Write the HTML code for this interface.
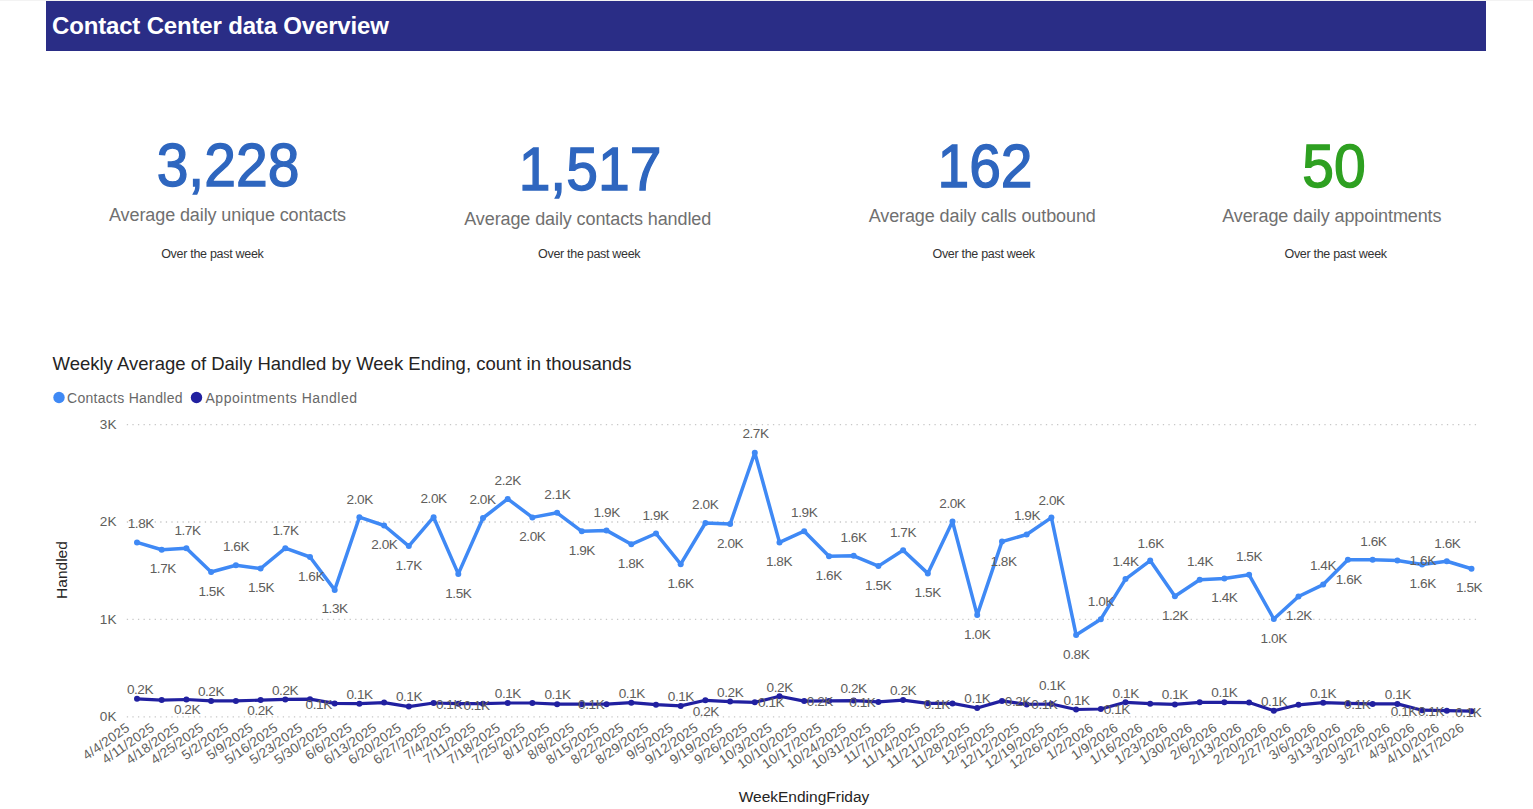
<!DOCTYPE html>
<html><head><meta charset="utf-8">
<style>
html,body{margin:0;padding:0;background:#fff;}
body{width:1533px;height:809px;overflow:hidden;position:relative;font-family:"Liberation Sans",sans-serif;}
.topline{position:absolute;left:0;top:0;width:1533px;height:1px;background:#f3f3f3;}
.banner{position:absolute;left:46px;top:1px;width:1440px;height:50px;background:#2a2d86;}
.banner span{position:absolute;left:6px;top:9px;letter-spacing:-0.17px;font-weight:bold;font-size:24px;color:#fff;white-space:nowrap;line-height:32px;}
.t{position:absolute;white-space:nowrap;text-align:center;line-height:1;}
.num{font-size:62px;color:#2e66bf;transform:scaleX(0.92);transform-origin:50% 50%;-webkit-text-stroke:1.4px currentColor;}
.lab{font-size:18px;color:#707070;letter-spacing:-0.1px;}
.sub{font-size:12.5px;color:#333;letter-spacing:-0.3px;}
svg{position:absolute;left:0;top:0;}
svg text{font-family:"Liberation Sans",sans-serif;}
.g{stroke:#c8c8c8;stroke-width:1.3;stroke-dasharray:1.3 4.27;}
.yl{font-size:13.6px;fill:#605e5c;text-anchor:end;}
.dl{font-size:13.6px;fill:#605e5c;text-anchor:middle;letter-spacing:-0.45px;}
.xl{font-size:13.5px;fill:#605e5c;text-anchor:end;letter-spacing:0.1px;}
.lc{fill:none;stroke:#3f89f5;stroke-width:3.5;stroke-linejoin:round;}
.la{fill:none;stroke:#2120a0;stroke-width:3.2;stroke-linejoin:round;}
.title{font-size:18.5px;fill:#252423;}
.leg{font-size:14px;fill:#686868;}
.axt{font-size:15.5px;fill:#252423;}
</style></head><body>
<div class="topline"></div>
<div class="banner"><span>Contact Center data Overview</span></div>

<div class="t num" style="left:107.65px;top:134px;width:240px;">3,228</div>
<div class="t lab" style="left:77.5px;top:206px;width:300px;">Average daily unique contacts</div>
<div class="t sub" style="left:112.35px;top:248px;width:200px;">Over the past week</div>

<div class="t num" style="left:470.1px;top:138px;width:240px;">1,517</div>
<div class="t lab" style="left:437.7px;top:210px;width:300px;">Average daily contacts handled</div>
<div class="t sub" style="left:489.2px;top:248px;width:200px;">Over the past week</div>

<div class="t num" style="left:864.8px;top:135px;width:240px;">162</div>
<div class="t lab" style="left:832.2px;top:207px;width:300px;">Average daily calls outbound</div>
<div class="t sub" style="left:883.65px;top:248px;width:200px;">Over the past week</div>

<div class="t num" style="left:1213.65px;top:135px;width:240px;color:#2ea021;">50</div>
<div class="t lab" style="left:1181.8px;top:207px;width:300px;">Average daily appointments</div>
<div class="t sub" style="left:1235.65px;top:248px;width:200px;">Over the past week</div>

<svg width="1533" height="809" viewBox="0 0 1533 809">
<text x="52.5" y="370" class="title">Weekly Average of Daily Handled by Week Ending, count in thousands</text>
<circle cx="59" cy="397.5" r="5.7" fill="#3f89f5"/>
<text x="67" y="402.5" class="leg" textLength="115.5" lengthAdjust="spacing">Contacts Handled</text>
<circle cx="196.5" cy="397.5" r="5.7" fill="#2120a0"/>
<text x="205.5" y="402.5" class="leg" textLength="151.5" lengthAdjust="spacing">Appointments Handled</text>
<text transform="translate(67.3,570) rotate(-90)" class="axt" text-anchor="middle">Handled</text>
<text x="804" y="801.6" class="axt" text-anchor="middle">WeekEndingFriday</text>
<line x1="126.8" y1="424.6" x2="1478.5" y2="424.6" class="g"/>
<line x1="126.8" y1="522.0" x2="1478.5" y2="522.0" class="g"/>
<line x1="126.8" y1="619.4" x2="1478.5" y2="619.4" class="g"/>
<line x1="126.8" y1="716.8" x2="1478.5" y2="716.8" class="g"/>
<text x="116.5" y="428.8" class="yl">3K</text>
<text x="116.5" y="526.2" class="yl">2K</text>
<text x="116.5" y="623.6" class="yl">1K</text>
<text x="116.5" y="721.0" class="yl">0K</text>
<polyline points="137.0,542.4 161.7,549.8 186.4,548.2 211.1,572.0 235.9,565.3 260.6,568.5 285.3,548.2 310.0,557.0 334.7,589.9 359.4,517.2 384.1,525.5 408.8,546.1 433.6,517.2 458.3,573.9 483.0,518.0 507.7,498.9 532.4,517.4 557.1,512.8 581.8,531.3 606.5,530.4 631.3,544.3 656.0,533.5 680.7,564.2 705.4,523.0 730.1,524.1 754.8,452.7 779.5,542.4 804.2,531.2 829.0,556.2 853.7,555.8 878.4,566.1 903.1,550.2 927.8,573.4 952.5,521.5 977.2,615.1 1002.0,541.6 1026.7,534.5 1051.4,517.6 1076.1,634.9 1100.8,619.2 1125.5,579.1 1150.2,560.6 1174.9,596.2 1199.7,579.7 1224.4,578.5 1249.1,574.8 1273.8,619.0 1298.5,596.5 1323.2,584.6 1347.9,559.7 1372.6,559.7 1397.4,560.5 1422.1,564.6 1446.8,561.3 1471.5,568.7" class="lc"/>
<circle cx="137.0" cy="542.4" r="3" fill="#3f89f5"/>
<circle cx="161.7" cy="549.8" r="3" fill="#3f89f5"/>
<circle cx="186.4" cy="548.2" r="3" fill="#3f89f5"/>
<circle cx="211.1" cy="572.0" r="3" fill="#3f89f5"/>
<circle cx="235.9" cy="565.3" r="3" fill="#3f89f5"/>
<circle cx="260.6" cy="568.5" r="3" fill="#3f89f5"/>
<circle cx="285.3" cy="548.2" r="3" fill="#3f89f5"/>
<circle cx="310.0" cy="557.0" r="3" fill="#3f89f5"/>
<circle cx="334.7" cy="589.9" r="3" fill="#3f89f5"/>
<circle cx="359.4" cy="517.2" r="3" fill="#3f89f5"/>
<circle cx="384.1" cy="525.5" r="3" fill="#3f89f5"/>
<circle cx="408.8" cy="546.1" r="3" fill="#3f89f5"/>
<circle cx="433.6" cy="517.2" r="3" fill="#3f89f5"/>
<circle cx="458.3" cy="573.9" r="3" fill="#3f89f5"/>
<circle cx="483.0" cy="518.0" r="3" fill="#3f89f5"/>
<circle cx="507.7" cy="498.9" r="3" fill="#3f89f5"/>
<circle cx="532.4" cy="517.4" r="3" fill="#3f89f5"/>
<circle cx="557.1" cy="512.8" r="3" fill="#3f89f5"/>
<circle cx="581.8" cy="531.3" r="3" fill="#3f89f5"/>
<circle cx="606.5" cy="530.4" r="3" fill="#3f89f5"/>
<circle cx="631.3" cy="544.3" r="3" fill="#3f89f5"/>
<circle cx="656.0" cy="533.5" r="3" fill="#3f89f5"/>
<circle cx="680.7" cy="564.2" r="3" fill="#3f89f5"/>
<circle cx="705.4" cy="523.0" r="3" fill="#3f89f5"/>
<circle cx="730.1" cy="524.1" r="3" fill="#3f89f5"/>
<circle cx="754.8" cy="452.7" r="3" fill="#3f89f5"/>
<circle cx="779.5" cy="542.4" r="3" fill="#3f89f5"/>
<circle cx="804.2" cy="531.2" r="3" fill="#3f89f5"/>
<circle cx="829.0" cy="556.2" r="3" fill="#3f89f5"/>
<circle cx="853.7" cy="555.8" r="3" fill="#3f89f5"/>
<circle cx="878.4" cy="566.1" r="3" fill="#3f89f5"/>
<circle cx="903.1" cy="550.2" r="3" fill="#3f89f5"/>
<circle cx="927.8" cy="573.4" r="3" fill="#3f89f5"/>
<circle cx="952.5" cy="521.5" r="3" fill="#3f89f5"/>
<circle cx="977.2" cy="615.1" r="3" fill="#3f89f5"/>
<circle cx="1002.0" cy="541.6" r="3" fill="#3f89f5"/>
<circle cx="1026.7" cy="534.5" r="3" fill="#3f89f5"/>
<circle cx="1051.4" cy="517.6" r="3" fill="#3f89f5"/>
<circle cx="1076.1" cy="634.9" r="3" fill="#3f89f5"/>
<circle cx="1100.8" cy="619.2" r="3" fill="#3f89f5"/>
<circle cx="1125.5" cy="579.1" r="3" fill="#3f89f5"/>
<circle cx="1150.2" cy="560.6" r="3" fill="#3f89f5"/>
<circle cx="1174.9" cy="596.2" r="3" fill="#3f89f5"/>
<circle cx="1199.7" cy="579.7" r="3" fill="#3f89f5"/>
<circle cx="1224.4" cy="578.5" r="3" fill="#3f89f5"/>
<circle cx="1249.1" cy="574.8" r="3" fill="#3f89f5"/>
<circle cx="1273.8" cy="619.0" r="3" fill="#3f89f5"/>
<circle cx="1298.5" cy="596.5" r="3" fill="#3f89f5"/>
<circle cx="1323.2" cy="584.6" r="3" fill="#3f89f5"/>
<circle cx="1347.9" cy="559.7" r="3" fill="#3f89f5"/>
<circle cx="1372.6" cy="559.7" r="3" fill="#3f89f5"/>
<circle cx="1397.4" cy="560.5" r="3" fill="#3f89f5"/>
<circle cx="1422.1" cy="564.6" r="3" fill="#3f89f5"/>
<circle cx="1446.8" cy="561.3" r="3" fill="#3f89f5"/>
<circle cx="1471.5" cy="568.7" r="3" fill="#3f89f5"/>
<polyline points="137.0,698.8 161.7,700.1 186.4,699.5 211.1,700.9 235.9,700.9 260.6,700.1 285.3,699.4 310.0,699.2 334.7,703.4 359.4,703.7 384.1,702.6 408.8,706.6 433.6,703.0 458.3,703.7 483.0,703.7 507.7,703.0 532.4,703.0 557.1,704.2 581.8,704.2 606.5,704.2 631.3,702.7 656.0,704.7 680.7,705.9 705.4,700.3 730.1,701.6 754.8,702.3 779.5,696.3 804.2,701.1 829.0,700.9 853.7,700.6 878.4,701.9 903.1,700.1 927.8,703.3 952.5,703.4 977.2,708.0 1002.0,700.9 1026.7,704.4 1051.4,704.0 1076.1,709.5 1100.8,709.0 1125.5,702.3 1150.2,703.7 1174.9,704.4 1199.7,702.3 1224.4,702.3 1249.1,702.6 1273.8,710.7 1298.5,704.8 1323.2,702.7 1347.9,703.4 1372.6,703.9 1397.4,703.9 1422.1,710.2 1446.8,710.7 1471.5,711.2" class="la"/>
<circle cx="137.0" cy="698.8" r="3" fill="#2120a0"/>
<circle cx="161.7" cy="700.1" r="3" fill="#2120a0"/>
<circle cx="186.4" cy="699.5" r="3" fill="#2120a0"/>
<circle cx="211.1" cy="700.9" r="3" fill="#2120a0"/>
<circle cx="235.9" cy="700.9" r="3" fill="#2120a0"/>
<circle cx="260.6" cy="700.1" r="3" fill="#2120a0"/>
<circle cx="285.3" cy="699.4" r="3" fill="#2120a0"/>
<circle cx="310.0" cy="699.2" r="3" fill="#2120a0"/>
<circle cx="334.7" cy="703.4" r="3" fill="#2120a0"/>
<circle cx="359.4" cy="703.7" r="3" fill="#2120a0"/>
<circle cx="384.1" cy="702.6" r="3" fill="#2120a0"/>
<circle cx="408.8" cy="706.6" r="3" fill="#2120a0"/>
<circle cx="433.6" cy="703.0" r="3" fill="#2120a0"/>
<circle cx="458.3" cy="703.7" r="3" fill="#2120a0"/>
<circle cx="483.0" cy="703.7" r="3" fill="#2120a0"/>
<circle cx="507.7" cy="703.0" r="3" fill="#2120a0"/>
<circle cx="532.4" cy="703.0" r="3" fill="#2120a0"/>
<circle cx="557.1" cy="704.2" r="3" fill="#2120a0"/>
<circle cx="581.8" cy="704.2" r="3" fill="#2120a0"/>
<circle cx="606.5" cy="704.2" r="3" fill="#2120a0"/>
<circle cx="631.3" cy="702.7" r="3" fill="#2120a0"/>
<circle cx="656.0" cy="704.7" r="3" fill="#2120a0"/>
<circle cx="680.7" cy="705.9" r="3" fill="#2120a0"/>
<circle cx="705.4" cy="700.3" r="3" fill="#2120a0"/>
<circle cx="730.1" cy="701.6" r="3" fill="#2120a0"/>
<circle cx="754.8" cy="702.3" r="3" fill="#2120a0"/>
<circle cx="779.5" cy="696.3" r="3" fill="#2120a0"/>
<circle cx="804.2" cy="701.1" r="3" fill="#2120a0"/>
<circle cx="829.0" cy="700.9" r="3" fill="#2120a0"/>
<circle cx="853.7" cy="700.6" r="3" fill="#2120a0"/>
<circle cx="878.4" cy="701.9" r="3" fill="#2120a0"/>
<circle cx="903.1" cy="700.1" r="3" fill="#2120a0"/>
<circle cx="927.8" cy="703.3" r="3" fill="#2120a0"/>
<circle cx="952.5" cy="703.4" r="3" fill="#2120a0"/>
<circle cx="977.2" cy="708.0" r="3" fill="#2120a0"/>
<circle cx="1002.0" cy="700.9" r="3" fill="#2120a0"/>
<circle cx="1026.7" cy="704.4" r="3" fill="#2120a0"/>
<circle cx="1051.4" cy="704.0" r="3" fill="#2120a0"/>
<circle cx="1076.1" cy="709.5" r="3" fill="#2120a0"/>
<circle cx="1100.8" cy="709.0" r="3" fill="#2120a0"/>
<circle cx="1125.5" cy="702.3" r="3" fill="#2120a0"/>
<circle cx="1150.2" cy="703.7" r="3" fill="#2120a0"/>
<circle cx="1174.9" cy="704.4" r="3" fill="#2120a0"/>
<circle cx="1199.7" cy="702.3" r="3" fill="#2120a0"/>
<circle cx="1224.4" cy="702.3" r="3" fill="#2120a0"/>
<circle cx="1249.1" cy="702.6" r="3" fill="#2120a0"/>
<circle cx="1273.8" cy="710.7" r="3" fill="#2120a0"/>
<circle cx="1298.5" cy="704.8" r="3" fill="#2120a0"/>
<circle cx="1323.2" cy="702.7" r="3" fill="#2120a0"/>
<circle cx="1347.9" cy="703.4" r="3" fill="#2120a0"/>
<circle cx="1372.6" cy="703.9" r="3" fill="#2120a0"/>
<circle cx="1397.4" cy="703.9" r="3" fill="#2120a0"/>
<circle cx="1422.1" cy="710.2" r="3" fill="#2120a0"/>
<circle cx="1446.8" cy="710.7" r="3" fill="#2120a0"/>
<circle cx="1471.5" cy="711.2" r="3" fill="#2120a0"/>
<text x="140.8" y="527.9" class="dl">1.8K</text>
<text x="162.8" y="572.9" class="dl">1.7K</text>
<text x="187.5" y="535.3" class="dl">1.7K</text>
<text x="211.5" y="595.7" class="dl">1.5K</text>
<text x="236" y="550.9" class="dl">1.6K</text>
<text x="261" y="591.9" class="dl">1.5K</text>
<text x="285.5" y="534.9" class="dl">1.7K</text>
<text x="311" y="580.9" class="dl">1.6K</text>
<text x="334.6" y="613.4" class="dl">1.3K</text>
<text x="359.7" y="503.9" class="dl">2.0K</text>
<text x="384.3" y="549.4" class="dl">2.0K</text>
<text x="408.7" y="569.9" class="dl">1.7K</text>
<text x="433.6" y="503.4" class="dl">2.0K</text>
<text x="458.3" y="597.9" class="dl">1.5K</text>
<text x="482.5" y="504.4" class="dl">2.0K</text>
<text x="507.7" y="484.9" class="dl">2.2K</text>
<text x="532.3" y="540.9" class="dl">2.0K</text>
<text x="557.4" y="498.9" class="dl">2.1K</text>
<text x="581.9" y="554.9" class="dl">1.9K</text>
<text x="606.7" y="516.9" class="dl">1.9K</text>
<text x="630.9" y="567.9" class="dl">1.8K</text>
<text x="655.6" y="519.9" class="dl">1.9K</text>
<text x="680.5" y="587.9" class="dl">1.6K</text>
<text x="705.2" y="508.9" class="dl">2.0K</text>
<text x="730.1" y="547.9" class="dl">2.0K</text>
<text x="755.5" y="437.9" class="dl">2.7K</text>
<text x="779.0" y="565.9" class="dl">1.8K</text>
<text x="804.2" y="517.4" class="dl">1.9K</text>
<text x="828.7" y="579.9" class="dl">1.6K</text>
<text x="853.5" y="541.9" class="dl">1.6K</text>
<text x="878.2" y="589.9" class="dl">1.5K</text>
<text x="903" y="536.9" class="dl">1.7K</text>
<text x="927.7" y="596.9" class="dl">1.5K</text>
<text x="952.4" y="507.9" class="dl">2.0K</text>
<text x="977.2" y="638.9" class="dl">1.0K</text>
<text x="1003.5" y="565.9" class="dl">1.8K</text>
<text x="1027" y="520.1" class="dl">1.9K</text>
<text x="1051.6" y="504.9" class="dl">2.0K</text>
<text x="1076.2" y="659.1" class="dl">0.8K</text>
<text x="1100.9" y="605.8" class="dl">1.0K</text>
<text x="1125.5" y="565.9" class="dl">1.4K</text>
<text x="1150.7" y="547.8" class="dl">1.6K</text>
<text x="1175" y="620.1" class="dl">1.2K</text>
<text x="1200" y="566.4" class="dl">1.4K</text>
<text x="1224.4" y="601.9" class="dl">1.4K</text>
<text x="1249" y="561.2" class="dl">1.5K</text>
<text x="1273.7" y="643.4" class="dl">1.0K</text>
<text x="1298.8" y="620.1" class="dl">1.2K</text>
<text x="1323" y="570.2" class="dl">1.4K</text>
<text x="1348.8" y="584.2" class="dl">1.6K</text>
<text x="1373.4" y="546.0" class="dl">1.6K</text>
<text x="1422.7" y="564.9" class="dl">1.6K</text>
<text x="1422.7" y="588.3" class="dl">1.6K</text>
<text x="1447.4" y="547.8" class="dl">1.6K</text>
<text x="1469.1" y="591.8" class="dl">1.5K</text>
<text x="140" y="693.9" class="dl">0.2K</text>
<text x="187" y="714.4" class="dl">0.2K</text>
<text x="211" y="696.4" class="dl">0.2K</text>
<text x="260.4" y="715.1" class="dl">0.2K</text>
<text x="285.1" y="694.7" class="dl">0.2K</text>
<text x="318.7" y="708.6" class="dl">0.1K</text>
<text x="359.6" y="699.3" class="dl">0.1K</text>
<text x="409" y="701.4" class="dl">0.1K</text>
<text x="449" y="709.3" class="dl">0.1K</text>
<text x="476.5" y="710.1" class="dl">0.1K</text>
<text x="507.9" y="697.9" class="dl">0.1K</text>
<text x="557.5" y="699.3" class="dl">0.1K</text>
<text x="591.2" y="709.3" class="dl">0.1K</text>
<text x="631.8" y="697.9" class="dl">0.1K</text>
<text x="680.9" y="700.7" class="dl">0.1K</text>
<text x="705.8" y="715.5" class="dl">0.2K</text>
<text x="730.2" y="697.1" class="dl">0.2K</text>
<text x="771.1" y="707.2" class="dl">0.1K</text>
<text x="779.7" y="692.1" class="dl">0.2K</text>
<text x="819.9" y="706.2" class="dl">0.2K</text>
<text x="853.6" y="693.3" class="dl">0.2K</text>
<text x="862.3" y="707.2" class="dl">0.1K</text>
<text x="903.1" y="695.0" class="dl">0.2K</text>
<text x="936.8" y="709.1" class="dl">0.1K</text>
<text x="977.4" y="702.9" class="dl">0.1K</text>
<text x="1017.9" y="705.8" class="dl">0.2K</text>
<text x="1044.4" y="709.3" class="dl">0.1K</text>
<text x="1052.2" y="690.4" class="dl">0.1K</text>
<text x="1076.6" y="705.0" class="dl">0.1K</text>
<text x="1116.8" y="713.6" class="dl">0.1K</text>
<text x="1125.7" y="697.9" class="dl">0.1K</text>
<text x="1174.9" y="698.6" class="dl">0.1K</text>
<text x="1224.4" y="697.1" class="dl">0.1K</text>
<text x="1274.1" y="706.3" class="dl">0.1K</text>
<text x="1323" y="698.1" class="dl">0.1K</text>
<text x="1357.2" y="708.8" class="dl">0.1K</text>
<text x="1397.9" y="698.6" class="dl">0.1K</text>
<text x="1403.8" y="715.6" class="dl">0.1K</text>
<text x="1431" y="715.6" class="dl">0.1K</text>
<text x="1468.3" y="716.5" class="dl">0.1K</text>
<text transform="translate(130.5,730.0) rotate(-35)" class="xl">4/4/2025</text>
<text transform="translate(155.2,730.0) rotate(-35)" class="xl">4/11/2025</text>
<text transform="translate(179.9,730.0) rotate(-35)" class="xl">4/18/2025</text>
<text transform="translate(204.6,730.0) rotate(-35)" class="xl">4/25/2025</text>
<text transform="translate(229.4,730.0) rotate(-35)" class="xl">5/2/2025</text>
<text transform="translate(254.1,730.0) rotate(-35)" class="xl">5/9/2025</text>
<text transform="translate(278.8,730.0) rotate(-35)" class="xl">5/16/2025</text>
<text transform="translate(303.5,730.0) rotate(-35)" class="xl">5/23/2025</text>
<text transform="translate(328.2,730.0) rotate(-35)" class="xl">5/30/2025</text>
<text transform="translate(352.9,730.0) rotate(-35)" class="xl">6/6/2025</text>
<text transform="translate(377.6,730.0) rotate(-35)" class="xl">6/13/2025</text>
<text transform="translate(402.3,730.0) rotate(-35)" class="xl">6/20/2025</text>
<text transform="translate(427.1,730.0) rotate(-35)" class="xl">6/27/2025</text>
<text transform="translate(451.8,730.0) rotate(-35)" class="xl">7/4/2025</text>
<text transform="translate(476.5,730.0) rotate(-35)" class="xl">7/11/2025</text>
<text transform="translate(501.2,730.0) rotate(-35)" class="xl">7/18/2025</text>
<text transform="translate(525.9,730.0) rotate(-35)" class="xl">7/25/2025</text>
<text transform="translate(550.6,730.0) rotate(-35)" class="xl">8/1/2025</text>
<text transform="translate(575.3,730.0) rotate(-35)" class="xl">8/8/2025</text>
<text transform="translate(600.0,730.0) rotate(-35)" class="xl">8/15/2025</text>
<text transform="translate(624.8,730.0) rotate(-35)" class="xl">8/22/2025</text>
<text transform="translate(649.5,730.0) rotate(-35)" class="xl">8/29/2025</text>
<text transform="translate(674.2,730.0) rotate(-35)" class="xl">9/5/2025</text>
<text transform="translate(698.9,730.0) rotate(-35)" class="xl">9/12/2025</text>
<text transform="translate(723.6,730.0) rotate(-35)" class="xl">9/19/2025</text>
<text transform="translate(748.3,730.0) rotate(-35)" class="xl">9/26/2025</text>
<text transform="translate(773.0,730.0) rotate(-35)" class="xl">10/3/2025</text>
<text transform="translate(797.8,730.0) rotate(-35)" class="xl">10/10/2025</text>
<text transform="translate(822.5,730.0) rotate(-35)" class="xl">10/17/2025</text>
<text transform="translate(847.2,730.0) rotate(-35)" class="xl">10/24/2025</text>
<text transform="translate(871.9,730.0) rotate(-35)" class="xl">10/31/2025</text>
<text transform="translate(896.6,730.0) rotate(-35)" class="xl">11/7/2025</text>
<text transform="translate(921.3,730.0) rotate(-35)" class="xl">11/14/2025</text>
<text transform="translate(946.0,730.0) rotate(-35)" class="xl">11/21/2025</text>
<text transform="translate(970.7,730.0) rotate(-35)" class="xl">11/28/2025</text>
<text transform="translate(995.5,730.0) rotate(-35)" class="xl">12/5/2025</text>
<text transform="translate(1020.2,730.0) rotate(-35)" class="xl">12/12/2025</text>
<text transform="translate(1044.9,730.0) rotate(-35)" class="xl">12/19/2025</text>
<text transform="translate(1069.6,730.0) rotate(-35)" class="xl">12/26/2025</text>
<text transform="translate(1094.3,730.0) rotate(-35)" class="xl">1/2/2026</text>
<text transform="translate(1119.0,730.0) rotate(-35)" class="xl">1/9/2026</text>
<text transform="translate(1143.7,730.0) rotate(-35)" class="xl">1/16/2026</text>
<text transform="translate(1168.4,730.0) rotate(-35)" class="xl">1/23/2026</text>
<text transform="translate(1193.2,730.0) rotate(-35)" class="xl">1/30/2026</text>
<text transform="translate(1217.9,730.0) rotate(-35)" class="xl">2/6/2026</text>
<text transform="translate(1242.6,730.0) rotate(-35)" class="xl">2/13/2026</text>
<text transform="translate(1267.3,730.0) rotate(-35)" class="xl">2/20/2026</text>
<text transform="translate(1292.0,730.0) rotate(-35)" class="xl">2/27/2026</text>
<text transform="translate(1316.7,730.0) rotate(-35)" class="xl">3/6/2026</text>
<text transform="translate(1341.4,730.0) rotate(-35)" class="xl">3/13/2026</text>
<text transform="translate(1366.1,730.0) rotate(-35)" class="xl">3/20/2026</text>
<text transform="translate(1390.9,730.0) rotate(-35)" class="xl">3/27/2026</text>
<text transform="translate(1415.6,730.0) rotate(-35)" class="xl">4/3/2026</text>
<text transform="translate(1440.3,730.0) rotate(-35)" class="xl">4/10/2026</text>
<text transform="translate(1465.0,730.0) rotate(-35)" class="xl">4/17/2026</text>
</svg>
</body></html>
